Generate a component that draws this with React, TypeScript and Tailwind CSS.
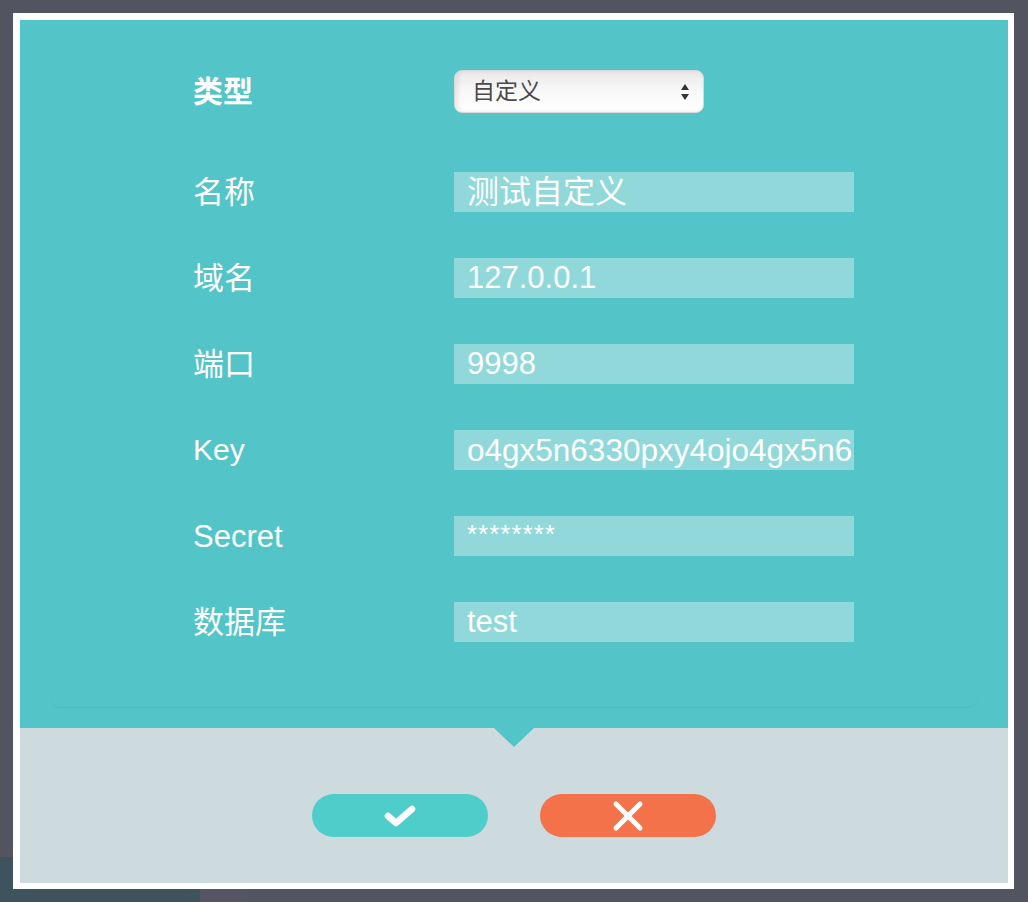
import React from "react";

const cjk = '"Liberation Sans", "Noto Sans CJK SC", sans-serif';

function Row({ label, value, labelSize, valueSize, small }: { label: string; value: string; labelSize: number; valueSize: number; small?: boolean }) {
  return (
    <div className="flex items-center h-[40px]">
      <div className="w-[261px] text-white leading-none" style={{ fontSize: labelSize }}>{label}</div>
      <div className="w-[400px] h-[40px] bg-[#90d8da] overflow-hidden whitespace-nowrap pl-[13px] text-white flex">
        {small ? (
          <span className="text-[26px] leading-none pt-[5px] tracking-[1px]">{value}</span>
        ) : (
          <span className="leading-[40px]" style={{ fontSize: valueSize }}>{value}</span>
        )}
      </div>
    </div>
  );
}

export default function App() {
  return (
    <div className="relative w-[1028px] h-[902px] bg-[#525560] overflow-hidden" style={{ fontFamily: cjk }}>
      <div className="absolute left-0 top-[857px] w-[200px] h-[45px] bg-[#3f535f]" />
      <div className="absolute left-[200px] top-[889px] w-[48px] h-[13px] bg-[#555563]" />
      <div className="absolute left-[13px] top-[13px] w-[1001px] h-[876px] bg-white pl-[7px] pt-[7px] pr-[6px] pb-[6px] flex flex-col">
        <div className="h-[708px] bg-[#53c4c8] flex flex-col relative">
          <div className="pl-[173px] pt-[50px] flex flex-col">
            <div className="flex items-center h-[43px]">
              <div className="w-[261px] text-white font-bold text-[30px] leading-none">类型</div>
              <div className="w-[250px] h-[43px] rounded-[8px] bg-gradient-to-b from-[#e9e9e9] via-[#f8f8f8] to-white border border-[#d8d8d8] shadow-[inset_3px_0_4px_rgba(0,0,0,0.08)] flex items-center justify-between pl-[17px] pr-[13px]">
                <span className="text-[23px] text-[#4a4a4a] leading-none">自定义</span>
                <svg width="10" height="18" viewBox="0 0 10 18">
                  <path d="M5 1 L9 7 L1 7 Z" fill="#333" />
                  <path d="M5 17 L9 11 L1 11 Z" fill="#333" />
                </svg>
              </div>
            </div>
            <div className="flex flex-col gap-[46px] mt-[59px]">
              <Row label="名称" value="测试自定义" labelSize={31} valueSize={32} />
              <Row label="域名" value="127.0.0.1" labelSize={31} valueSize={31} />
              <Row label="端口" value="9998" labelSize={31} valueSize={31} />
              <Row label="Key" value="o4gx5n6330pxy4ojo4gx5n6330pxy4ojo" labelSize={30} valueSize={31.5} />
              <Row label="Secret" value="********" labelSize={31} valueSize={31} small />
              <Row label="数据库" value="test" labelSize={31} valueSize={31} />
            </div>
          </div>
          <div className="mx-[30px] mt-[52px] h-[14px] border-b border-[#4dbcc0] rounded-b-[10px]" />
        </div>
        <div className="flex-1 bg-[#cddbdf] relative flex justify-center items-start pt-[66px] gap-[52px]">
          <div className="absolute left-1/2 top-0 -translate-x-1/2 w-0 h-0 border-l-[20px] border-r-[20px] border-t-[19px] border-l-transparent border-r-transparent border-t-[#53c4c8]" />
          <button className="w-[176px] h-[43px] rounded-full bg-[#4ecdcb] flex items-center justify-center">
            <svg width="34" height="24" viewBox="0 0 34 24">
              <path d="M5 12 L13 19 L29 5" stroke="white" strokeWidth="6.5" fill="none" strokeLinecap="round" strokeLinejoin="round" />
            </svg>
          </button>
          <button className="w-[176px] h-[43px] rounded-full bg-[#f47249] flex items-center justify-center">
            <svg width="32" height="32" viewBox="0 0 32 32">
              <path d="M4 4 L28 28 M28 4 L4 28" stroke="white" strokeWidth="5" fill="none" strokeLinecap="round" />
            </svg>
          </button>
        </div>
      </div>
    </div>
  );
}
